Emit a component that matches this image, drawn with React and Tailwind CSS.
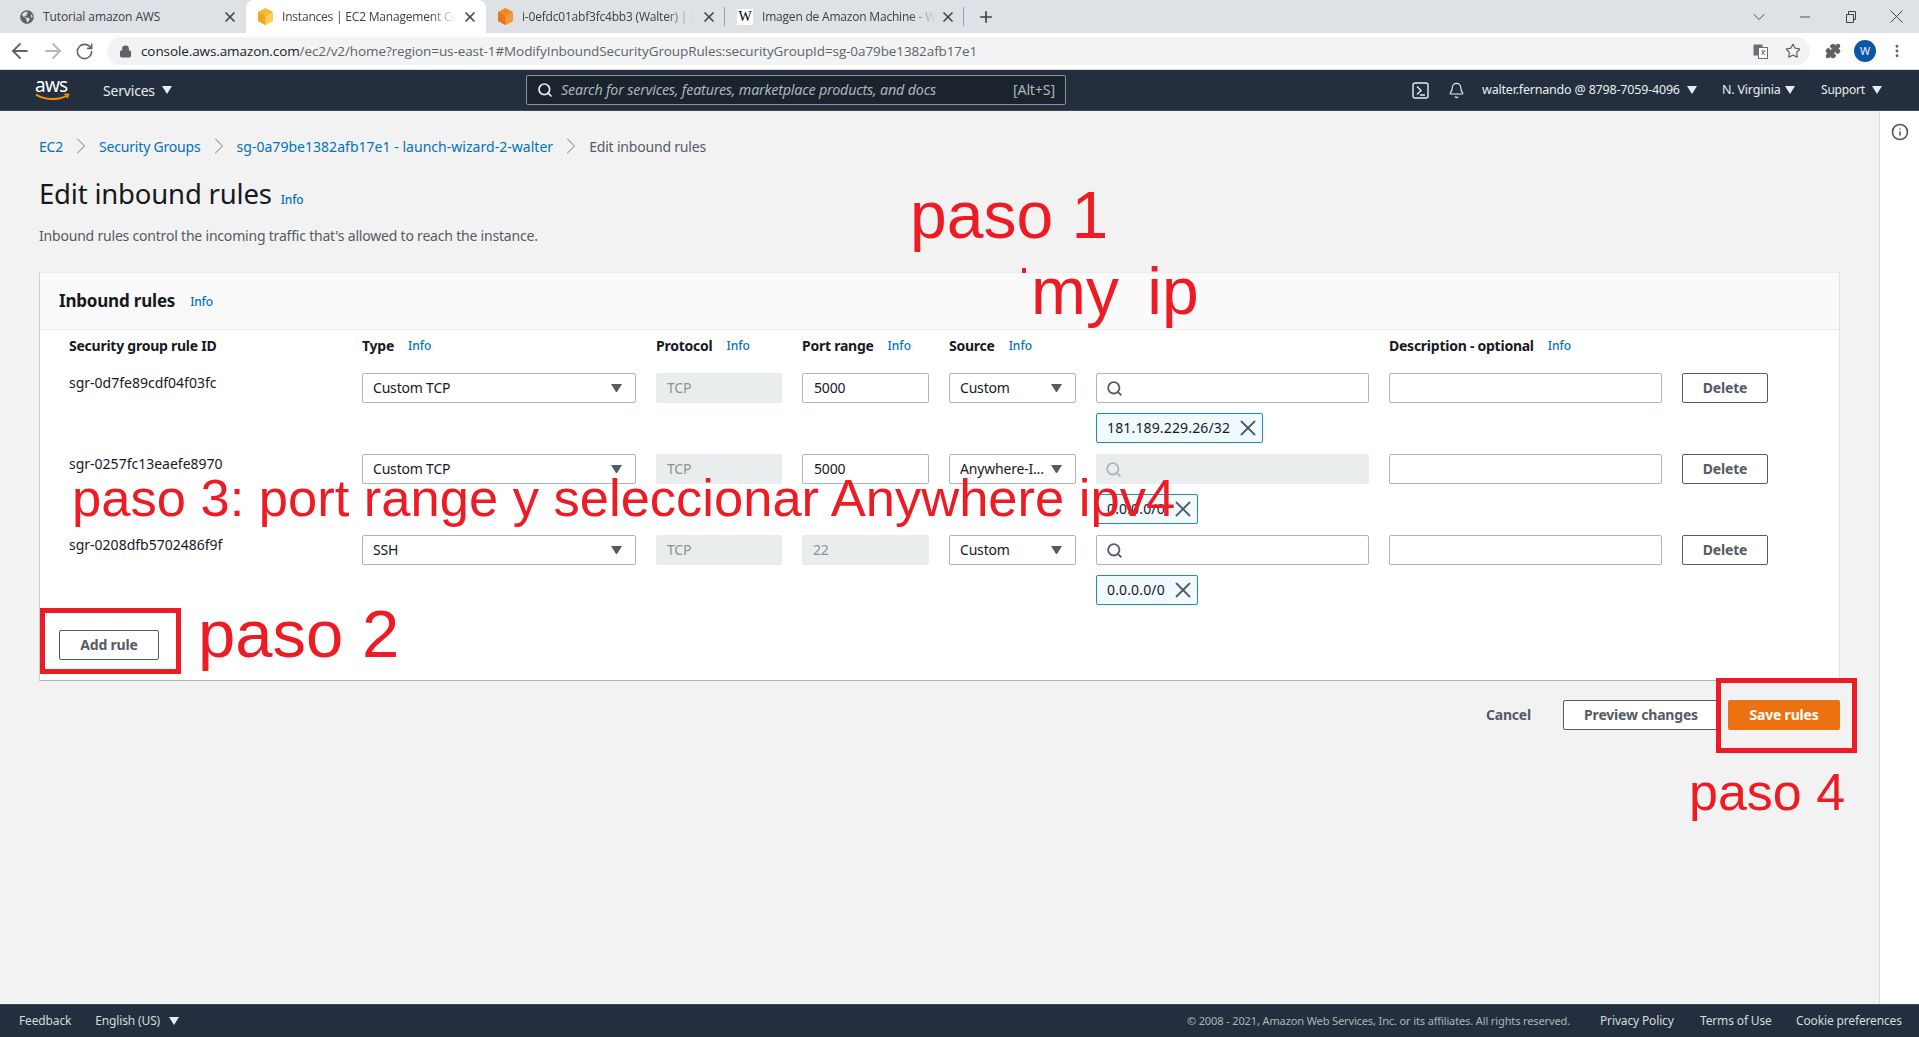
import React from "react";
import { Search, X, Plus, ArrowLeft, ArrowRight, RotateCw, Lock, Star, Puzzle, ChevronDown, ChevronRight, Minus, Bell, Info as InfoIcon, EllipsisVertical } from "lucide-react";
import { FaGlobeAmericas } from "react-icons/fa";

const ember = "font-['Noto_Sans',sans-serif] tracking-[-0.012em]";

const Caret = ({ size = 10, color = "#fff", className = "" }) => (
  <svg width={size} height={size * 0.8} viewBox="0 0 10 8" className={className}><path d="M0 0H10L5 8Z" fill={color} /></svg>
);

const Cube = ({ a, b, c }) => (
  <svg width="15" height="17" viewBox="0 0 15 17">
    <path d="M7.5 0L15 4V13L7.5 17L0 13V4Z" fill={a} />
    <path d="M0 4L7.5 8V17L0 13Z" fill={b} />
    <path d="M15 4L7.5 8V17L15 13Z" fill={c} />
  </svg>
);

const Tab = ({ w, icon, title, active, sep, fade, textW, iconW = 38 }) => (
  <div className={`relative flex items-center h-[33px] shrink-0 ${active ? "bg-white rounded-t-lg" : ""}`} style={{ width: w }}>
    <div className="flex justify-end pr-[3px] shrink-0" style={{ width: iconW }}>{icon}</div>
    <div
      className={`ml-[6px] text-[12px] text-[#3c4043] whitespace-nowrap overflow-hidden font-['Open_Sans',sans-serif] ${fade ? "tracking-[-0.2px] [mask-image:linear-gradient(to_right,#000_85%,transparent)]" : "tracking-[-0.1px]"}`}
      style={{ width: textW }}
    >{title}</div>
    <X size={16} strokeWidth={2.6} className="absolute text-[#45484c]" style={{ left: w - 24 }} />
    {sep && <div className="absolute right-0 top-[7px] h-[19px] w-px bg-[#9aa0a6]" />}
  </div>
);

const ChromeBar = () => (
  <>
    <div className="h-[33px] bg-[#dee1e6] flex items-center relative shrink-0">
      <Tab w={246} textW={190} iconW={37} icon={<FaGlobeAmericas size={14} color="#5f6368" />} title="Tutorial amazon AWS" />
      <Tab w={240} textW={174} iconW={30} active fade icon={<Cube a="#f7b733" b="#f0a91f" c="#ffcf5c" />} title="Instances | EC2 Management Console" />
      <Tab w={239} textW={171} iconW={30} sep fade icon={<Cube a="#f08a24" b="#e8761a" c="#f59a3c" />} title="i-0efdc01abf3fc4bb3 (Walter) | EC2" />
      <Tab w={239} textW={174} iconW={31} sep fade icon={<div className="w-4 h-4 bg-white flex items-center justify-center font-['Liberation_Serif',serif] text-[14px] text-black leading-none">W</div>} title="Imagen de Amazon Machine - Wikipedia" />
      <Plus size={18} strokeWidth={2.2} className="ml-[13px] text-[#3c4043]" />
      <div className="ml-auto flex items-center text-[#3c4043]">
        <ChevronDown size={20} strokeWidth={1.1} className="mr-[28px]" />
        <Minus size={16} strokeWidth={1.3} className="mr-[32px]" />
        <svg width="12" height="12" viewBox="0 0 12 12" fill="none" stroke="#3c4043" className="mr-[28px]"><path d="M1.5 3.5h7v8h-7z M3.5 3.5v-3h7v8h-2" /></svg>
        <X size={23} strokeWidth={1} className="mr-[11px]" />
      </div>
    </div>
    <div className="h-[37px] bg-white flex items-center shrink-0 border-b border-[#dadce0]">
      <ArrowLeft size={24} strokeWidth={1.8} className="ml-[8px] text-[#5f6368]" />
      <ArrowRight size={24} strokeWidth={1.8} className="ml-[9px] text-[#b4b7bb]" />
      <RotateCw size={19} strokeWidth={2} className="ml-[10px] text-[#5f6368]" />
      <div className="ml-[13px] w-[1703px] h-[28px] rounded-full bg-[#f1f3f4] flex items-center relative">
        <Lock size={13} strokeWidth={2.5} fill="#5f6368" className="ml-[12px] text-[#5f6368]" />
        <div className="ml-[9px] text-[13.5px] font-['Open_Sans',sans-serif] tracking-[-0.1px] text-[#5f6368] whitespace-nowrap">
          <span className="text-[#202124]">console.aws.amazon.com</span>/ec2/v2/home?region=us-east-1#ModifyInboundSecurityGroupRules:securityGroupId=sg-0a79be1382afb17e1
        </div>
        <div className="ml-auto flex items-center">
          <svg width="15" height="15" viewBox="0 0 15 15" className="mr-[17px]"><rect x="0.5" y="0.5" width="9" height="11" fill="#6b6e72" /><rect x="5.5" y="3.5" width="9" height="11" fill="#fff" stroke="#6b6e72" /><path d="M8 7h4.5M10 6v1M8.5 11l3-4M9 8l3 3" stroke="#6b6e72" fill="none" strokeWidth="0.9" /></svg>
          <Star size={16} strokeWidth={1.8} className="mr-[9px] text-[#5f6368]" />
        </div>
      </div>
      <div className="flex items-center ml-[15px]">
        <Puzzle size={16} fill="#5f6368" className="text-[#5f6368]" />
        <div className="ml-[13px] w-[22px] h-[22px] rounded-full bg-[#0b57a4] text-white text-[11px] flex items-center justify-center font-['Open_Sans',sans-serif]">W</div>
        <EllipsisVertical size={16} strokeWidth={2.4} className="ml-[13px] text-[#5f6368]" />
      </div>
    </div>
  </>
);

const AwsNav = () => (
  <div className={`h-[41px] bg-[#232f3e] border-b border-[#414750] flex items-center shrink-0 text-[#eaeded] relative ${ember}`}>
    <svg width="35" height="24" viewBox="0 0 35 24" className="ml-[35px]">
      <text x="0" y="14" fontSize="19" fill="#fff" fontFamily="'Noto Sans',sans-serif" textLength="33">aws</text>
      <path d="M1 16.5C9 22 24 22.5 32 17.5" stroke="#f79400" strokeWidth="2" fill="none" />
      <path d="M29.5 16.2L33.5 16.5L32 20" stroke="#f79400" strokeWidth="1.6" fill="none" />
    </svg>
    <span className="w-[54px] ml-[33px] text-[14px] whitespace-nowrap">Services</span>
    <Caret className="ml-[5px]" color="#eaeded" />
    <div className="ml-[354px] w-[540px] h-[30px] bg-[#1a232e] border border-[#8d9599] rounded-[2px] flex items-center text-[14.3px] text-[#aab7b8]">
      <Search size={16} strokeWidth={2.6} className="ml-[10px] text-[#eaeded]" />
      <span className="ml-[8px] italic">Search for services, features, marketplace products, and docs</span>
      <span className="ml-auto mr-[10px]">[Alt+S]</span>
    </div>
    <svg width="17" height="17" viewBox="0 0 17 17" fill="none" stroke="#eaeded" strokeWidth="1.4" className="ml-[346px]"><rect x="1" y="1" width="15" height="15" rx="2" /><path d="M5 4.5l4 4-4 4M8 13h5" /></svg>
    <Bell size={17} strokeWidth={1.6} className="ml-[19px]" />
    <span className="w-[198px] ml-[17px] text-[12.5px] whitespace-nowrap">walter.fernando @ 8798-7059-4096</span>
    <Caret className="ml-[7px]" color="#eaeded" />
    <span className="w-[58px] ml-[25px] text-[12.5px] whitespace-nowrap">N. Virginia</span>
    <Caret className="ml-[5px]" color="#eaeded" />
    <span className="w-[44px] ml-[26px] text-[12px] whitespace-nowrap">Support</span>
    <Caret className="ml-[7px]" color="#eaeded" />
  </div>
);

const Info = ({ className = "" }) => <span className={`text-[12px] font-medium text-[#0073bb] ${className}`}>Info</span>;

const Crumb = ({ children, className = "" }) => <span className={`text-[#0073bb] ${className}`}>{children}</span>;
const Sep = () => <ChevronRight size={28} strokeWidth={0.9} className="mx-[4px] text-[#879596]" />;

const Select = ({ value }) => (
  <div className="h-[30px] bg-white border border-[#aab7b8] rounded-[2px] flex items-center pl-[10px] pr-[13px] text-[14px] text-[#16191f]">
    <span className="truncate whitespace-nowrap flex-1 pb-[2px]">{value}</span>
    <Caret size={11} color="#545b64" className="ml-[2px] shrink-0" />
  </div>
);
const Input = ({ value = "" }) => (
  <div className="h-[30px] bg-white border border-[#aab7b8] rounded-[2px] flex items-center px-[11px] pb-[2px] text-[14px] text-[#16191f]">{value}</div>
);
const Disabled = ({ value }) => (
  <div className="h-[30px] bg-[#eaeded] rounded-[2px] flex items-center px-[11px] pb-[2px] text-[14px] text-[#879596]">{value}</div>
);
const SearchBox = ({ disabled }) => (
  <div className={`h-[30px] rounded-[2px] flex items-center pl-[9px] ${disabled ? "bg-[#eaeded]" : "bg-white border border-[#aab7b8]"}`}>
    <Search size={17} strokeWidth={2.6} className={disabled ? "text-[#aab7b8]" : "text-[#545b64]"} />
  </div>
);
const Token = ({ value }) => (
  <div className="mt-[10px] h-[30px] inline-flex items-center bg-[#f1faff] border border-[#1f8fab] rounded-[2px] pl-[10px] pr-[1px] text-[14px] tracking-[0.15px] text-[#16191f] whitespace-nowrap">
    <span className="pb-[2px]">{value}</span>
    <X size={26} strokeWidth={1.7} className="ml-[5px] text-[#545b64]" />
  </div>
);
const Btn = ({ children, className = "" }) => (
  <div className={`h-[30px] border border-[#545b64] rounded-[2px] bg-white flex items-center justify-center pb-[2px] text-[14px] font-bold text-[#545b64] ${className}`}>{children}</div>
);

const rows = [
  { id: "sgr-0d7fe89cdf04f03fc", type: "Custom TCP", port: <Input value="5000" />, src: "Custom", token: "181.189.229.26/32" },
  { id: "sgr-0257fc13eaefe8970", type: "Custom TCP", port: <Input value="5000" />, src: "Anywhere-I...", disabled: true, token: "0.0.0.0/0" },
  { id: "sgr-0208dfb5702486f9f", type: "SSH", port: <Disabled value="22" />, src: "Custom", token: "0.0.0.0/0" },
];
const cols = "grid grid-cols-[273px_274px_126px_127px_127px_273px_273px_86px] gap-x-5";
const Head = ({ label, info = true }) => (
  <div className="flex items-center h-[20px] text-[14px] font-bold tracking-[-0.25px] text-[#16191f] whitespace-nowrap">
    {label}{info && <Info className="ml-[14px] mt-[2px] tracking-normal" />}
  </div>
);

const Card = () => (
  <div className="bg-white border border-[#eaeded] border-l-[#c9cfd1] border-r-[#dfe3e4] border-b-[#aab7b8] w-[1801px] mt-[26px]">
    <div className="h-[57px] bg-[#fafafa] border-b border-[#eaeded] flex items-center pl-[19px]">
      <span className="text-[17px] font-bold text-[#16191f]">Inbound rules</span>
      <Info className="ml-[15px] mt-[2px]" />
    </div>
    <div className={`${cols} pl-[29px] pt-[5px] h-[43px]`}>
      <Head label="Security group rule ID" info={false} />
      <Head label="Type" />
      <Head label="Protocol" />
      <Head label="Port range" />
      <Head label="Source" />
      <div />
      <Head label="Description - optional" />
      <div />
    </div>
    {rows.map((r) => (
      <div key={r.id} className={`${cols} pl-[29px] h-[81px] items-start`}>
        <div className="text-[14px] tracking-normal text-[#16191f] leading-5">{r.id}</div>
        <Select value={r.type} />
        <Disabled value="TCP" />
        {r.port}
        <Select value={r.src} />
        <div className="flex flex-col items-start">
          <div className="w-full"><SearchBox disabled={r.disabled} /></div>
          <Token value={r.token} />
        </div>
        <Input />
        <Btn>Delete</Btn>
      </div>
    ))}
    <div className="pl-[19px] pt-[14px] pb-[20px]">
      <Btn className="w-[100px]">Add rule</Btn>
    </div>
  </div>
);

const Footer = () => (
  <div className={`h-[33px] bg-[#232f3e] border-t border-[#414750] flex items-center text-[12px] text-[#d5dbdb] shrink-0 ${ember}`}>
    <span className="ml-[19px]">Feedback</span>
    <span className="ml-[24px]">English (US)</span>
    <Caret className="ml-[9px]" color="#eaeded" />
    <span className="ml-auto text-[11.05px] text-[#aab7b8] whitespace-nowrap">© 2008 - 2021, Amazon Web Services, Inc. or its affiliates. All rights reserved.</span>
    <span className="ml-[30px] w-[74px] whitespace-nowrap">Privacy Policy</span>
    <span className="ml-[26px] w-[70px] whitespace-nowrap">Terms of Use</span>
    <span className="ml-[26px] w-[103px] mr-[20px] whitespace-nowrap">Cookie preferences</span>
  </div>
);

const Note = ({ children, className }) => (
  <div className={`absolute font-['Liberation_Sans',sans-serif] text-[#ed1c24] whitespace-pre leading-none ${className}`}>{children}</div>
);

export default function App() {
  return (
    <div className="relative h-[1037px] w-[1919px] overflow-hidden flex flex-col bg-[#f2f2f2]">
      <ChromeBar />
      <AwsNav />
      <div className={`flex-1 flex min-h-0 ${ember}`}>
        <main className="w-[1879px] pl-[39px] shrink-0">
          <div className="flex items-center h-[24px] mt-[23px] text-[14px] text-[#545b64]">
            <Crumb>EC2</Crumb><Sep />
            <Crumb>Security Groups</Crumb><Sep />
            <Crumb className="tracking-[0.03px]">sg-0a79be1382afb17e1 - launch-wizard-2-walter</Crumb><Sep />
            <span>Edit inbound rules</span>
          </div>
          <div className="flex items-baseline mt-[18px] h-[36px]">
            <h1 className="text-[27.5px] leading-9 font-normal text-[#16191f]">Edit inbound rules</h1>
            <Info className="ml-[9px]" />
          </div>
          <p className="mt-[14px] h-[20px] text-[14px] leading-5 tracking-[-0.2px] text-[#545b64]">Inbound rules control the incoming traffic that's allowed to reach the instance.</p>
          <Card />
          <div className="w-[1801px] flex items-center justify-end mt-[19px]">
            <span className="text-[14px] font-bold text-[#545b64] mr-[32px] pb-[2px]">Cancel</span>
            <Btn className="w-[156px] mr-[9px]">Preview changes</Btn>
            <div className="w-[112px] h-[30px] rounded-[2px] bg-[#ec7211] flex items-center justify-center pb-[2px] text-[14px] font-bold text-white">Save rules</div>
          </div>
        </main>
        <aside className="flex-1 bg-white border-l border-[#d5dbdb] flex justify-center pt-[12px]">
          <InfoIcon size={18} strokeWidth={2.2} className="text-[#545b64]" />
        </aside>
      </div>
      <Footer />

      <Note className="left-[910px] top-[182px] text-[66px]">paso 1</Note>
      <Note className="left-[1031px] top-[258px] text-[66px] [word-spacing:0.15em]">my ip</Note>
      <div className="absolute left-[1022px] top-[268px] w-[4px] h-[5px] bg-[#ed1c24]" />
      <Note className="left-[72px] top-[472px] text-[52.5px]">paso 3: port range y seleccionar Anywhere ipv4</Note>
      <Note className="left-[198px] top-[600px] text-[67px]">paso 2</Note>
      <Note className="left-[1689px] top-[766px] text-[52px]">paso 4</Note>
      <div className="absolute left-[40px] top-[608px] w-[141px] h-[66px] border-[5px] border-[#ed1c24]" />
      <div className="absolute left-[1716px] top-[678px] w-[141px] h-[75px] border-[5px] border-[#ed1c24]" />
    </div>
  );
}
